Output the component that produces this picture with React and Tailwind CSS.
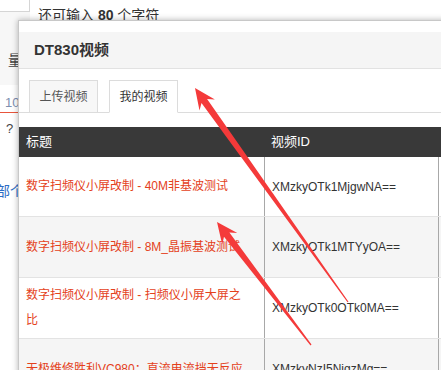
import React from 'react';

const rows = [
  { title: '数字扫频仪小屏改制 - 40M非基波测试', id: 'XMzkyOTk1MjgwNA==', cls: 'h-[60px] bg-white' },
  { title: '数字扫频仪小屏改制 - 8M_晶振基波测试', id: 'XMzkyOTk1MTYyOA==', cls: 'h-[61px] bg-[#f5f5f5]' },
  { title: '数字扫频仪小屏改制 - 扫频仪小屏大屏之比', id: 'XMzkyOTk0OTk0MA==', cls: 'h-[61px] bg-white' },
  { title: '无极维修胜利VC980：直流电流挡无反应', id: 'XMzkyNzI5NjgzMg==', cls: 'h-[61px] bg-[#f5f5f5]' },
];

// tapered annotation arrow, tip -> tail
function arrowPoints(tx, ty, ex, ey) {
  const dx = ex - tx;
  const dy = ey - ty;
  const len = Math.hypot(dx, dy);
  const ux = dx / len;
  const uy = dy / len;
  const nx = -uy;
  const ny = ux;
  const p = (a, b) => `${(tx + ux * a + nx * b).toFixed(1)},${(ty + uy * a + ny * b).toFixed(1)}`;
  return [p(0, 0), p(21, 9.5), p(16, 3.4), p(len, 0.6), p(len, -0.6), p(16, -3.4), p(21, -9.5)].join(' ');
}

export default function App() {
  return (
    <div className="relative w-[441px] h-[370px] overflow-hidden bg-white font-['Liberation_Sans','Noto_Sans_CJK_SC',sans-serif]">
      {/* page behind the dialog */}
      <div className="flex">
        <div className="flex flex-col w-[30px] shrink-0">
          <div className="h-[12px] border-r border-b border-[#d5d5d5]" />
          <div className="h-[73px] bg-[#f7f7f7] pl-[8px] pt-[40px] text-[14px] leading-[16px] text-[#444]">量</div>
          <div className="h-[28px] pl-[5px] pt-[10px] text-[13px] leading-[16px] text-[#7d8fb0] border-b border-[#e8553c]">10</div>
          <div className="pl-[6px] pt-[8px] text-[13px] leading-[16px] text-[#444]">?</div>
          <div className="-ml-[4px] pt-[46px] text-[14px] leading-[16px] text-[#2b6cc4] whitespace-nowrap">部个</div>
        </div>
        <div className="pl-[8px] pt-[6px] text-[14px] leading-[18px] text-[#333] whitespace-nowrap">
          还可输入 <span className="font-bold">80</span> 个字符
        </div>
      </div>

      {/* dialog */}
      <div className="absolute left-[18px] top-[20px] w-[450px] h-[360px] bg-white border-l border-t border-[#c8c8c8] shadow-[0_0_6px_rgba(0,0,0,0.3)]">
        <div className="h-[11px]" />
        <div className="h-[37px] flex items-center pl-[15px] bg-[#f5f5f5] border-b border-[#e2e2e2] text-[15px] font-bold text-[#333]">
          DT830视频
        </div>
        <div className="h-[44px] flex items-end gap-[11px] pl-[10px] border-b border-[#dcdcdc]">
          <div className="w-[69px] h-[33px] -mb-px flex items-center justify-center border border-[#dcdcdc] bg-[#f7f7f7] text-[12px] text-[#555]">
            上传视频
          </div>
          <div className="w-[69px] h-[33px] -mb-px flex items-center justify-center border border-b-white border-[#dcdcdc] bg-white text-[12px] text-[#333]">
            我的视频
          </div>
        </div>

        {/* table */}
        <div className="mt-[14px]">
          <div className="h-[30px] flex items-center bg-[#393939] text-white text-[13px]">
            <div className="w-[245px] pl-[7px]">标题</div>
            <div className="pl-[7px]">视频ID</div>
          </div>
          {rows.map((r) => (
            <div key={r.id} className={`flex border-b border-[#e3e3e3] ${r.cls}`}>
              <div className="w-[245px] shrink-0 flex items-center pl-[7px] pr-[16px] text-[12px] leading-[25px] text-[#e4411b]">
                {r.title}
              </div>
              <div className="w-[174px] shrink-0 flex items-center pl-[7px] border-l border-[#a8a8a8] text-[12px] text-[#333]">
                {r.id}
              </div>
              <div className="flex-1 border-l border-[#a8a8a8]" />
            </div>
          ))}
        </div>
      </div>

      {/* red annotation arrows */}
      <svg className="absolute inset-0 pointer-events-none" width="441" height="370" viewBox="0 0 441 370">
        <polygon points={arrowPoints(195, 88, 348, 302)} fill="#f43a3a" />
        <polygon points={arrowPoints(217, 222, 311, 345)} fill="#f43a3a" />
      </svg>
    </div>
  );
}
